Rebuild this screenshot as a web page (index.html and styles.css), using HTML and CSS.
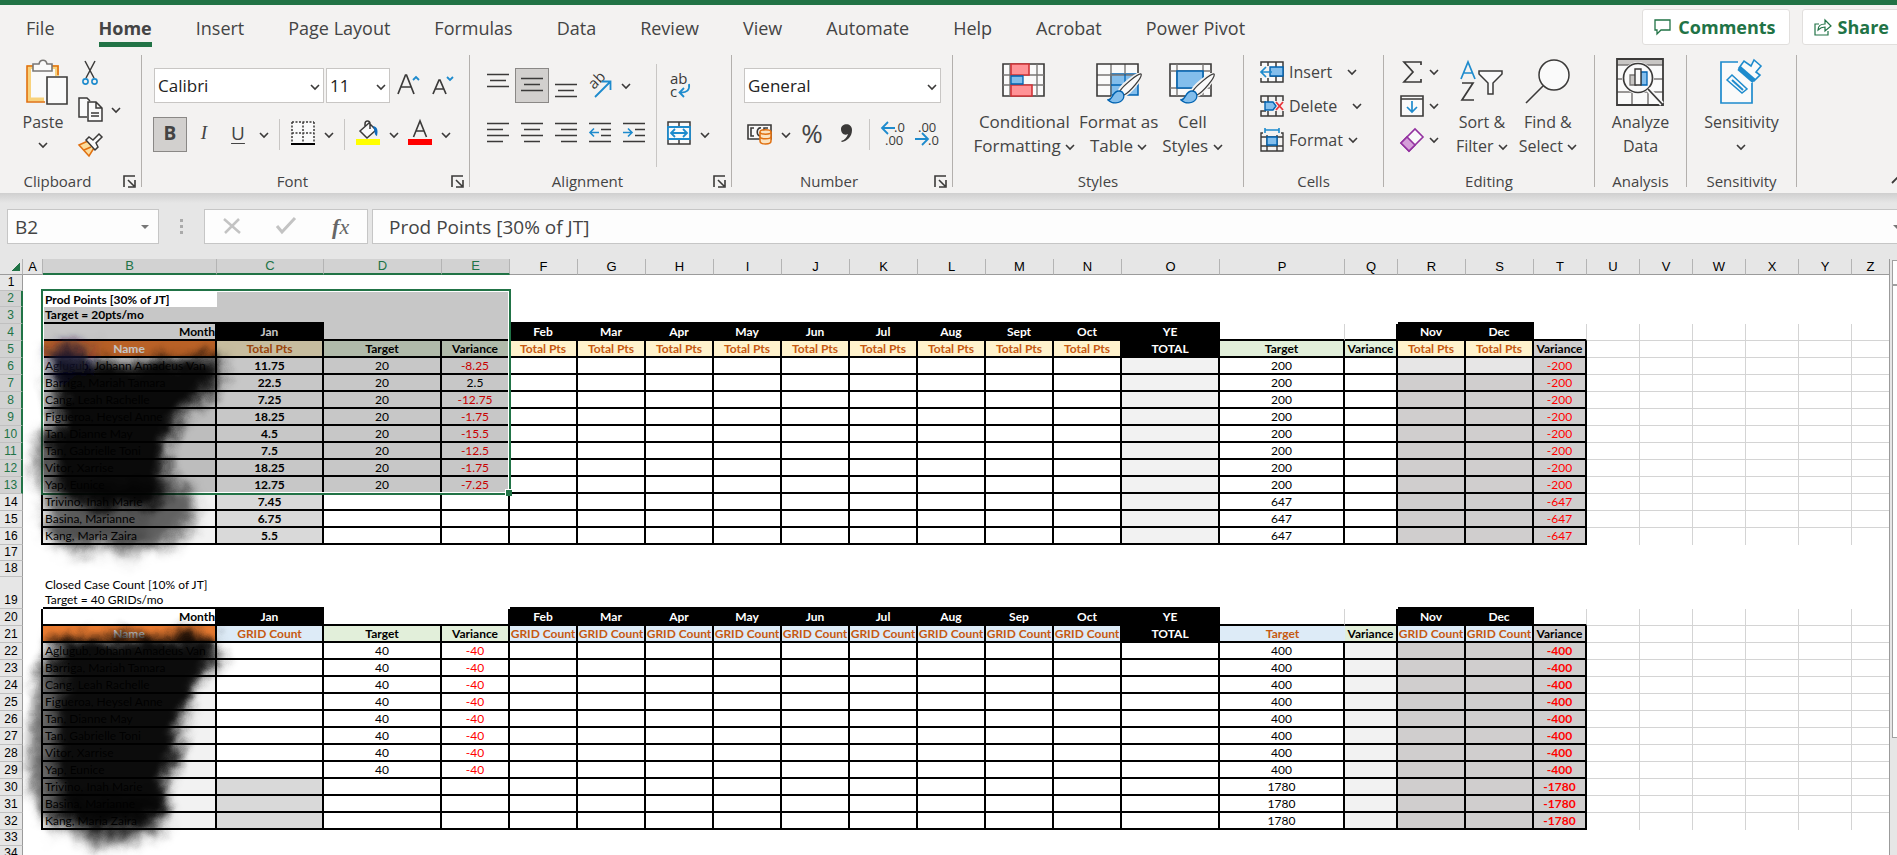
FILE: index.html
```html
<!DOCTYPE html>
<html lang="en">
<head>
    <meta charset="UTF-8">
    <meta name="viewport" content="width=device-width, initial-scale=1.0">
    <title>Prod Points</title>
    <link rel="stylesheet" href="styles.css">
</head>
<body>
    <svg class="defs" width="0" height="0">
        <symbol id="chev" viewBox="0 0 10 10"><path d="M1 3l4 4 4-4" fill="none" stroke="#3b3a39" stroke-width="1.6"/></symbol>
        <symbol id="launch" viewBox="0 0 13 13"><path d="M1 12V1h11M5 5l6 6M12 5v7H5" fill="none" stroke="#3b3a39" stroke-width="1.6"/></symbol>
        <symbol id="brush" viewBox="0 0 36 32">
            <path d="M34 1c-3-1-21 13-21 17l4 4C22 20 36 4 34 1z" fill="#fafafa" stroke="#f3f2f1" stroke-width="4"/>
            <path d="M34 1c-3-1-19 13-21 17l4 4C22 20 36 4 34 1z" fill="#fafafa" stroke="#3b3a39" stroke-width="1.3"/>
            <path d="M1 27c5 0 4-9 11-9 4 0 6 4 4 8-3 5-11 5-15 1z" fill="#83beec" stroke="#0063b1" stroke-width="1.3"/>
        </symbol>
    </svg>
    <header class="ribbon">
        <nav class="tabs">
            <a href="#">File</a>
            <a href="#" class="active">Home</a>
            <a href="#">Insert</a>
            <a href="#">Page Layout</a>
            <a href="#">Formulas</a>
            <a href="#">Data</a>
            <a href="#">Review</a>
            <a href="#">View</a>
            <a href="#">Automate</a>
            <a href="#">Help</a>
            <a href="#">Acrobat</a>
            <a href="#">Power Pivot</a>
            <div class="right">
                <button class="pill"><svg width="18" height="18" viewBox="0 0 18 18"><path d="M1 2h15v10H7l-4 4v-4H1z" fill="none" stroke="#217346" stroke-width="1.3"/></svg>Comments</button>
                <button class="pill share"><svg width="18" height="18" viewBox="0 0 18 18"><path d="M5 6H1v11h13v-4M4 12c0-4 3-6 7-6V2l6 6-6 5V9c-3 0-5 1-7 3z" fill="none" stroke="#217346" stroke-width="1.2"/></svg>Share</button>
            </div>
        </nav>
        <div class="groups">
            <section class="group clipboard">
                <div class="tools">
                    <button class="big paste">
                        <svg width="42" height="46" viewBox="0 0 42 46">
                            <path d="M2 7h30v35H2z" fill="#fafafa"/><path d="M18 40.500H3V8h28v9" fill="none" stroke="#f8d27c" stroke-width="4"/>
                            <path d="M19 43H1V7h31v9" fill="none" stroke="#e07010" stroke-width="1.600"/>
                            <path d="M7 5h6c1-5 7-5 8 0h5v7H7z" fill="#fafafa" stroke="#797775" stroke-width="1.600"/>
                            <path d="M21 18h20v27H21z" fill="#fafafa" stroke="#3b3a39" stroke-width="1.600"/>
                        </svg>
                        <span>Paste</span>
                        <svg class="chev"><use href="#chev"/></svg>
                    </button>
                    <div class="stack">
                        <button class="ic" aria-label="Cut"><svg width="24" height="26" viewBox="0 0 24 26"><path d="M7 1l9 17M17 1L8 18" stroke="#3b3a39" stroke-width="1.5" fill="none"/><circle cx="7.500" cy="21.500" r="2.600" fill="none" stroke="#1e8bcd" stroke-width="1.600"/><circle cx="16.500" cy="21.500" r="2.600" fill="none" stroke="#1e8bcd" stroke-width="1.600"/></svg></button>
                        <button class="ic" aria-label="Copy"><svg width="25" height="25" viewBox="0 0 25 25"><path d="M9 20H1V1h8l3 3" fill="#fafafa" stroke="#3b3a39" stroke-width="1.500"/><path d="M10 5h8l6 6v13H10zM18 5v6h6M13 16h8M13 19h8" fill="#fafafa" stroke="#3b3a39" stroke-width="1.500"/></svg></button>
                        <button class="ic" aria-label="Format Painter"><svg width="25" height="24" viewBox="0 0 25 24"><path d="M1 12l9-4 6 7-5 8z" fill="#fbdc9c" stroke="#e07010" stroke-width="1.500"/><path d="M6 17l7-3" stroke="#e07010" stroke-width="1.500"/><path d="M8 7l3-3 4 3 6-6 3 3-6 6 2 4-3 3z" fill="#fafafa" stroke="#3b3a39" stroke-width="1.500"/></svg></button>
                    </div>
                    <button class="arrow" aria-label="Copy options"><svg class="chev"><use href="#chev"/></svg></button>
                </div>
                <div class="label more">Clipboard<svg class="launch"><use href="#launch"/></svg></div>
            </section>

            <section class="group font">
                <div class="tools rows">
                    <div class="row">
                        <label class="combo name"><select aria-label="Font"><option>Calibri</option></select><svg class="chev"><use href="#chev"/></svg></label>
                        <label class="combo size"><select aria-label="Font size"><option>11</option></select><svg class="chev"><use href="#chev"/></svg></label>
                        <button class="ic grow" aria-label="Increase font size"><svg width="26" height="24" viewBox="0 0 26 24"><path d="M2 20L9.500 1h1L18 20M5 13h10" fill="none" stroke="#3b3a39" stroke-width="1.700"/><path d="M17 6l3-3 3 3" fill="none" stroke="#1e8bcd" stroke-width="1.800"/></svg></button>
                        <button class="ic grow" aria-label="Decrease font size"><svg width="26" height="24" viewBox="0 0 26 24"><path d="M3 20L9 6h1l6 14M5.500 15h8" fill="none" stroke="#3b3a39" stroke-width="1.700"/><path d="M17 3l3 3 3-3" fill="none" stroke="#1e8bcd" stroke-width="1.800"/></svg></button>
                    </div>
                    <div class="row">
                        <button class="ic on bold">B</button>
                        <button class="ic italic">I</button>
                        <button class="ic under">U</button>
                        <button class="arrow" aria-label="Underline options"><svg class="chev"><use href="#chev"/></svg></button>
                        <i class="sep"></i>
                        <button class="ic" aria-label="Borders"><svg width="24" height="24" viewBox="0 0 24 24"><path d="M1 1h22v21H1z" fill="#fafafa"/><path d="M1 1h22M1 1v20M23 1v20M12 1v20M1 12h22" fill="none" stroke="#3b3a39" stroke-width="1.500" stroke-dasharray="2 1.500"/><path d="M0 23h24" stroke="#000" stroke-width="2"/></svg></button>
                        <button class="arrow" aria-label="Border options"><svg class="chev"><use href="#chev"/></svg></button>
                        <i class="sep"></i>
                        <button class="ic" aria-label="Fill color"><svg width="24" height="26" viewBox="0 0 24 26"><path d="M4 11l9-8 7 7-9 8zM9 7V4c0-4 5-4 5 0v5" fill="#fafafa" stroke="#3b3a39" stroke-width="1.500"/><path d="M17 6c5 1 5 5 4 10-3-1-2-5-4-10z" fill="#0f6cbd"/><path d="M0 19h24v6H0z" fill="#ffff00"/></svg></button>
                        <button class="arrow" aria-label="Fill options"><svg class="chev"><use href="#chev"/></svg></button>
                        <button class="ic" aria-label="Font color"><svg width="24" height="26" viewBox="0 0 24 26"><path d="M5.500 17L12 1l6.500 16M8 11h8" fill="none" stroke="#3b3a39" stroke-width="1.600"/><path d="M0 19h24v6H0z" fill="#ff0000"/></svg></button>
                        <button class="arrow" aria-label="Font color options"><svg class="chev"><use href="#chev"/></svg></button>
                    </div>
                </div>
                <div class="label more">Font<svg class="launch"><use href="#launch"/></svg></div>
            </section>

            <section class="group align">
                <div class="tools">
                    <div class="rows">
                        <div class="row">
                            <button class="ic" aria-label="Top align"><svg class="ln" viewBox="0 0 22 24"><path d="M0 .500h22M3 6.500h16M0 12.500h22"/></svg></button>
                            <button class="ic on" aria-label="Middle align"><svg class="ln" viewBox="0 0 22 24"><path d="M0 4.500h22M3 10.500h16M0 16.500h22"/></svg></button>
                            <button class="ic" aria-label="Bottom align"><svg class="ln" viewBox="0 0 22 24"><path d="M0 10.500h22M3 16.500h16M0 22.500h22"/></svg></button>
                            <button class="ic" aria-label="Orientation"><svg width="26" height="26" viewBox="0 0 26 26"><text x="0" y="0" transform="translate(7 17) rotate(-45)" class="svgt">ab</text><path d="M8 24L23 9M15 8.500h8.500V17" fill="none" stroke="#1e8bcd" stroke-width="1.800"/></svg></button>
                            <button class="arrow" aria-label="Orientation options"><svg class="chev"><use href="#chev"/></svg></button>
                        </div>
                        <div class="row">
                            <button class="ic" aria-label="Align left"><svg class="ln" viewBox="0 0 22 24"><path d="M0 2.500h22M0 8.500h16M0 14.500h22M0 20.500h16"/></svg></button>
                            <button class="ic" aria-label="Center"><svg class="ln" viewBox="0 0 22 24"><path d="M0 2.500h22M3 8.500h16M0 14.500h22M3 20.500h16"/></svg></button>
                            <button class="ic" aria-label="Align right"><svg class="ln" viewBox="0 0 22 24"><path d="M0 2.500h22M6 8.500h16M0 14.500h22M6 20.500h16"/></svg></button>
                            <button class="ic" aria-label="Decrease indent"><svg class="ln" viewBox="0 0 22 24"><path d="M0 2.500h22M12 8.500h10M12 14.500h10M0 20.500h22"/><path d="M1 11.500h9M5 7.500l-4 4 4 4" class="blue"/></svg></button>
                            <button class="ic" aria-label="Increase indent"><svg class="ln" viewBox="0 0 22 24"><path d="M0 2.500h22M12 8.500h10M12 14.500h10M0 20.500h22"/><path d="M0 11.500h9M5 7.500l4 4-4 4" class="blue"/></svg></button>
                        </div>
                    </div>
                    <i class="sep tall"></i>
                    <div class="rows">
                        <div class="row">
                            <button class="ic" aria-label="Wrap text"><svg width="24" height="28" viewBox="0 0 24 28"><text x="3" y="12" class="svgt">ab</text><text x="3" y="25" class="svgt">c</text><path d="M22 12c1 6-2 9-9 8.500M17 16l-4.500 4.500L17 25" fill="none" stroke="#1e8bcd" stroke-width="1.800"/></svg></button>
                        </div>
                        <div class="row">
                            <button class="ic" aria-label="Merge and center"><svg width="24" height="24" viewBox="0 0 24 24"><path d="M1 1h22v22H1zM12 1v22" fill="#fafafa" stroke="#3b3a39" stroke-width="1.500"/><path d="M1 6h22v12H1z" fill="#fafafa" stroke="#1e8bcd" stroke-width="1.800"/><path d="M4 12h16M8 8l-4 4 4 4M16 8l4 4-4 4" fill="none" stroke="#1e8bcd" stroke-width="1.800"/></svg></button>
                            <button class="arrow" aria-label="Merge options"><svg class="chev"><use href="#chev"/></svg></button>
                        </div>
                    </div>
                </div>
                <div class="label more">Alignment<svg class="launch"><use href="#launch"/></svg></div>
            </section>

            <section class="group number">
                <div class="tools rows">
                    <div class="row">
                        <label class="combo wide"><select aria-label="Number format"><option>General</option></select><svg class="chev"><use href="#chev"/></svg></label>
                    </div>
                    <div class="row">
                        <button class="ic" aria-label="Accounting format"><svg width="26" height="24" viewBox="0 0 26 24"><path d="M1 4h23v14H1z" fill="#fafafa" stroke="#3b3a39" stroke-width="1.600"/><path d="M7 7H4v8h3M14 7c-5-1-5 9 0 8M17 11V7h4" fill="none" stroke="#3b3a39" stroke-width="1.600"/><path d="M13 11v9c0 4 11 4 11 0v-9" fill="#fbe3c0" stroke="#e07010" stroke-width="1.500"/><ellipse cx="18.500" cy="11" rx="5.500" ry="2.200" fill="#fbe3c0" stroke="#e07010" stroke-width="1.500"/><path d="M13 15.500c0 3 11 3 11 0" fill="none" stroke="#e07010" stroke-width="1.500"/></svg></button>
                        <button class="arrow" aria-label="Accounting options"><svg class="chev"><use href="#chev"/></svg></button>
                        <button class="ic pct">%</button>
                        <button class="ic" aria-label="Comma style"><svg width="14" height="20" viewBox="0 0 14 20"><path d="M2 6c0-6 11-7 11 1 0 7-5 11-10 12l-1-1c4-1 6-4 7-7-4 2-7-1-7-5z" fill="#3b3a39"/></svg></button>
                        <i class="sep"></i>
                        <button class="ic" aria-label="Increase decimal"><svg width="26" height="26" viewBox="0 0 26 26"><path d="M2 8h13M8 2L2 8l6 6" fill="none" stroke="#1e8bcd" stroke-width="1.800"/><text x="14" y="12" class="svgd">.0</text><text x="5" y="25" class="svgd">.00</text></svg></button>
                        <button class="ic" aria-label="Decrease decimal"><svg width="26" height="26" viewBox="0 0 26 26"><text x="4" y="12" class="svgd">.00</text><text x="14" y="25" class="svgd">.0</text><path d="M1 19h12M8 13l6 6-6 6" fill="none" stroke="#1e8bcd" stroke-width="1.800"/></svg></button>
                    </div>
                </div>
                <div class="label more">Number<svg class="launch"><use href="#launch"/></svg></div>
            </section>

            <section class="group styles">
                <div class="tools">
                    <button class="big">
                        <svg width="44" height="46" viewBox="0 0 44 46"><path d="M1 5h41v32H1z" fill="#fafafa" stroke="#3b3a39" stroke-width="1.600"/><path d="M8 5v32M35 5v32M1 16h41M1 26h41" stroke="#797775" stroke-width="1.400"/><path d="M9 5h18v11H9zM9 26h21v11H9z" fill="#ff9296" stroke="#d13438" stroke-width="1.600"/><path d="M9 17h12v8H9z" fill="#83beec" stroke="#0063b1" stroke-width="1.300"/></svg>
                        <span>Conditional</span><span>Formatting <svg class="chev"><use href="#chev"/></svg></span>
                    </button>
                    <button class="big">
                        <svg width="46" height="46" viewBox="0 0 46 46"><path d="M1 5h41v32H1z" fill="#fafafa"/><path d="M15 15h27v21H15z" fill="#83beec" stroke="#0063b1" stroke-width="1.500"/><path d="M15 5v32M29 5v10M1 16h41M1 26h14" stroke="#797775" stroke-width="1.400"/><path d="M29 15v21M15 26h27" stroke="#0063b1" stroke-width="1.300"/><path d="M15 37H1V5h41v9" fill="none" stroke="#3b3a39" stroke-width="1.600"/><use href="#brush" x="11" y="14" width="36" height="32"/></svg>
                        <span>Format as</span><span>Table <svg class="chev"><use href="#chev"/></svg></span>
                    </button>
                    <button class="big">
                        <svg width="46" height="46" viewBox="0 0 46 46"><path d="M1 5h41v32H1z" fill="#fafafa" stroke="#3b3a39" stroke-width="1.600"/><path d="M8 5v32M34 5v32M1 12h41M1 29h41" stroke="#797775" stroke-width="1.400"/><path d="M8 12h26v17H8z" fill="#83beec" stroke="#0063b1" stroke-width="1.600"/><use href="#brush" x="11" y="14" width="36" height="32"/></svg>
                        <span>Cell</span><span>Styles <svg class="chev"><use href="#chev"/></svg></span>
                    </button>
                </div>
                <div class="label">Styles</div>
            </section>

            <section class="group cells">
                <div class="tools list">
                    <button class="line"><svg width="24" height="22" viewBox="0 0 24 22"><path d="M1 1h22v20H1zM8 1v20M16 1v20M1 7h22M1 15h22" fill="#fafafa" stroke="#3b3a39" stroke-width="1.500"/><path d="M0 5h10v12H0z" fill="#f3f2f1"/><path d="M10 6h13v9H10z" fill="#83beec" stroke="#0063b1" stroke-width="1.400"/><path d="M1 11h11M6 6l-5 5 5 5" fill="none" stroke="#1e8bcd" stroke-width="1.700"/></svg>Insert<svg class="chev far"><use href="#chev"/></svg></button>
                    <button class="line"><svg width="24" height="22" viewBox="0 0 24 22"><path d="M1 7V1h22v5M23 16v5H1v-5h5M1 7h5M8 1v6M16 1v5M8 16v5M16 16v5" fill="none" stroke="#3b3a39" stroke-width="1.500"/><path d="M5 7h8l3 4-3 4H5z" fill="#83beec" stroke="#0063b1" stroke-width="1.400"/><path d="M16 7l7 8M23 7l-7 8" stroke="#e8343a" stroke-width="1.800"/></svg>Delete<svg class="chev far"><use href="#chev"/></svg></button>
                    <button class="line"><svg width="24" height="25" viewBox="0 0 24 25"><path d="M5 2h14M5 0v5M19 0v5" stroke="#1e8bcd" stroke-width="1.600" fill="none"/><path d="M3 5H1v18h22V5h-2M1 9h22M1 18h22M7 7v16M17 7v16" fill="none" stroke="#3b3a39" stroke-width="1.400"/><path d="M7 9h10v8H7z" fill="#83beec" stroke="#0063b1" stroke-width="1.400"/></svg>Format<svg class="chev"><use href="#chev"/></svg></button>
                </div>
                <div class="label">Cells</div>
            </section>

            <section class="group editing">
                <div class="tools">
                    <div class="list">
                        <button class="line" aria-label="AutoSum"><svg width="24" height="24" viewBox="0 0 24 24"><path d="M21 5V2H4l9 10-9 10h17v-3" fill="none" stroke="#3b3a39" stroke-width="1.700"/></svg><svg class="chev"><use href="#chev"/></svg></button>
                        <button class="line" aria-label="Fill"><svg width="24" height="22" viewBox="0 0 24 22"><path d="M1 1h22v20H1zM1 4h22" fill="#fafafa" stroke="#3b3a39" stroke-width="1.600"/><path d="M12 6v11M7 12l5 5 5-5" fill="none" stroke="#1e8bcd" stroke-width="1.700"/></svg><svg class="chev"><use href="#chev"/></svg></button>
                        <button class="line" aria-label="Clear"><svg width="24" height="24" viewBox="0 0 24 24"><path d="M1 15L15 1l8 8L9 23z" fill="#fafafa" stroke="#9332a0" stroke-width="1.600"/><path d="M1 15l6-6 8 8-6 6z" fill="#d59ed9" stroke="#9332a0" stroke-width="1.600"/></svg><svg class="chev"><use href="#chev"/></svg></button>
                    </div>
                    <button class="big">
                        <svg width="44" height="46" viewBox="0 0 44 46"><path d="M1 20L8 3l7 17M3 14h10" fill="none" stroke="#1e8bcd" stroke-width="1.700"/><path d="M2 24h11L2 41h12" fill="none" stroke="#3b3a39" stroke-width="1.700"/><path d="M19 12h23v3l-9 9v11h-5V24l-9-9z" fill="#fafafa" stroke="#3b3a39" stroke-width="1.500"/></svg>
                        <span>Sort &amp;</span><span>Filter <svg class="chev"><use href="#chev"/></svg></span>
                    </button>
                    <button class="big">
                        <svg width="46" height="46" viewBox="0 0 46 46"><circle cx="29" cy="16" r="15" fill="#fafafa" stroke="#3b3a39" stroke-width="1.500"/><path d="M18 27L1 44" stroke="#3b3a39" stroke-width="1.600"/></svg>
                        <span>Find &amp;</span><span>Select <svg class="chev"><use href="#chev"/></svg></span>
                    </button>
                </div>
                <div class="label">Editing</div>
            </section>

            <section class="group analysis">
                <div class="tools">
                    <button class="big">
                        <svg width="48" height="48" viewBox="0 0 48 48"><path d="M1 1h46v46H1z" fill="#fafafa"/><path d="M1 1h46v6H1z" fill="#c8c6c4"/><path d="M1 7h46M1 21h46M1 34h46M16 34v13M32 34v13" stroke="#797775" stroke-width="1.500"/><path d="M1 1h46v46H1z" fill="none" stroke="#3b3a39" stroke-width="1.800"/><circle cx="22" cy="20" r="16" fill="#fafafa"/><circle cx="22" cy="20" r="14.500" fill="#fafafa" stroke="#3b3a39" stroke-width="1.700"/><path d="M32 31l14 15" stroke="#fafafa" stroke-width="5"/><path d="M32 31l15 16" stroke="#3b3a39" stroke-width="1.800"/><path d="M14 17h6v10h-6z" fill="#c8c6c4" stroke="#797775" stroke-width="1.300"/><path d="M25 14h6v13h-6z" fill="#83beec" stroke="#0063b1" stroke-width="1.300"/><path d="M19 11h6v16h-6z" fill="#fafafa" stroke="#3b3a39" stroke-width="1.400"/></svg>
                        <span>Analyze</span><span>Data</span>
                    </button>
                </div>
                <div class="label">Analysis</div>
            </section>

            <section class="group sensitivity">
                <div class="tools">
                    <button class="big">
                        <svg width="42" height="46" viewBox="0 0 42 46"><path d="M18 3H1v41h31V24" fill="#fafafa" stroke="#1e8bcd" stroke-width="1.700"/><path d="M7 21l5-5 15 14-5 4z" fill="#fafafa" stroke="#1e8bcd" stroke-width="1.500"/><path d="M12 21l11 10" stroke="#1e8bcd" stroke-width="2"/><path d="M19 9l5-7 7 5 3-6 7 6-5 6 4 3-6 6z" fill="#fafafa" stroke="#1e8bcd" stroke-width="1.600"/><path d="M19 9l15 13" stroke="#1e8bcd" stroke-width="5"/></svg>
                        <span>Sensitivity</span><span><svg class="chev"><use href="#chev"/></svg></span>
                    </button>
                </div>
                <div class="label">Sensitivity</div>
            </section>
            <button class="collapse" aria-label="Collapse ribbon"><svg width="12" height="8" viewBox="0 0 12 8"><path d="M1 7l5-5 5 5" fill="none" stroke="#3b3a39" stroke-width="1.800"/></svg></button>
        </div>
    </header>

    <div class="formula">
        <label class="namebox"><input type="text" value="B2" aria-label="Name box"><i class="tri"></i></label>
        <span class="dots"><i></i><i></i><i></i></span>
        <div class="fx">
            <button aria-label="Cancel"><svg width="18" height="16" viewBox="0 0 18 16"><path d="M1 1l16 14M16 1L2 15" stroke="#c3c3c3" stroke-width="2.500"/></svg></button>
            <button aria-label="Enter"><svg width="20" height="17" viewBox="0 0 20 17"><path d="M1 9l5 6L19 1" fill="none" stroke="#c3c3c3" stroke-width="3"/></svg></button>
            <button class="fxb"><b>f</b>x</button>
        </div>
        <label class="entry"><input type="text" value="Prod Points [30% of JT]" aria-label="Formula"><i class="tri"></i></label>
    </div>

    <main class="sheet">
        <div class="grid">
            <table>
                <colgroup>
                    <col class="w-row"><col class="w-a"><col class="w-b"><col class="w-c"><col class="w-d"><col class="w-m">
                    <col class="w-m"><col class="w-m"><col class="w-m"><col class="w-m"><col class="w-m"><col class="w-m"><col class="w-m"><col class="w-m"><col class="w-m">
                    <col class="w-o"><col class="w-p"><col class="w-s"><col class="w-m"><col class="w-m"><col class="w-s">
                    <col class="w-s"><col class="w-s"><col class="w-s"><col class="w-s"><col class="w-s"><col>
                </colgroup>
                <thead><tr id="heads"></tr></thead>
                <tbody id="rows"></tbody>
            </table>
            <svg class="ink" width="260" height="600" viewBox="0 258 260 600">
                <filter id="smoke" x="-20%" y="-20%" width="140%" height="140%">
                    <feTurbulence type="fractalNoise" baseFrequency="0.035" numOctaves="3" seed="4" result="n"/>
                    <feGaussianBlur in="SourceGraphic" stdDeviation="7" result="b"/>
                    <feDisplacementMap in="b" in2="n" scale="22" xChannelSelector="R" yChannelSelector="G"/>
                </filter>
                <g filter="url(#smoke)">
                    <path d="M50 352L100 358 150 360 218 354 222 374 208 394 180 418 168 440 168 480 150 508 90 508 58 494 54 440 56 400z" opacity=".95"/>
                    <path d="M46 344L92 342 84 372 44 372z" fill="#1d1840" opacity=".5"/>
                    <path d="M34 440L62 420 62 510 40 510z" opacity=".5"/>
                    <path d="M60 490L186 482 198 506 180 535 168 548 70 546 46 536z" opacity=".6"/>
                    <path d="M60 520L156 520 140 558 60 552z" opacity=".2"/>
                </g>
                <g filter="url(#smoke)">
                    <path d="M52 640L100 634 214 634 222 656 194 680 184 720 176 750 166 790 158 824 104 830 60 820 56 760 58 700z" opacity=".95"/>
                    <path d="M34 690L56 646 62 822 42 814 30 770z" opacity=".6"/>
                    <path d="M54 800L168 790 162 834 116 844 58 836z" opacity=".5"/>
                </g>
            </svg>
        </div>
        <div class="scroll"><i class="up"></i><i class="thumb"></i></div>
    </main>

    <script>
        const names = ['Aglugub, Johann Amadeus Van', 'Barriga, Mariah Tamara', 'Cang, Leah Rachelle', 'Figueroa, Heysel Anne', 'Tan, Dianne May', 'Tan, Gabrielle Toni', 'Vitor, Xarrise', 'Yap, Eunice', 'Trivino, Inah Marie', 'Basina, Marianne', 'Kang, Maria Zaira'];
        const cols = 'ABCDEFGHIJKLMNOPQRSTUVWXYZ'.split('');

        // one entry for each block of the sheet, top = row of the black month header
        const blocks = [
            {
                top: 4, unit: 'Total Pts', kind: 'pts', target: 20, sept: 'Sept',
                points: [11.75, 22.5, 7.25, 18.25, 4.5, 7.5, 18.25, 12.75, 7.45, 6.75, 5.5],
                year: i => i < 8 ? 200 : 647
            },
            {
                top: 20, unit: 'GRID Count', kind: 'cnt', target: 40, sept: 'Sep',
                points: [],
                year: i => i < 8 ? 400 : 1780
            }
        ];

        function monthCell(b, c) {
            const months = { C: 'Jan', F: 'Feb', G: 'Mar', H: 'Apr', I: 'May', J: 'Jun', K: 'Jul', L: 'Aug', M: b.sept, N: 'Oct', O: 'YE', R: 'Nov', S: 'Dec' };
            if (c == 'B') return ['Month', 'box bold end'];
            if (months[c]) return [months[c], 'box black'];
            if (c == 'D') return ['', 'line'];
            if (c == 'P' || c == 'T') return ['', 'line gr'];
            return ['', 'box'];
        }

        function titleCell(b, c) {
            if (c == 'B') return ['Name', 'box orange'];
            if (c == 'O') return ['TOTAL', 'box black'];
            if (c == 'P' && b.kind == 'cnt') return ['Target', 'line unit cnt'];
            if (c == 'D' || c == 'P') return ['Target', 'box green'];
            if (c == 'E' || c == 'Q') return ['Variance', 'box green'];
            if (c == 'T') return ['Variance', 'box bold dark'];
            return [b.unit, 'box unit ' + b.kind];
        }

        function dataCell(b, c, i) {
            const first = b.kind == 'pts';
            if (c == 'B') return [names[i], 'box light start'];
            if (c == 'C') return [b.points[i] || '', 'box bold' + (i > 7 ? ' gray' : '')];
            if (c == 'D') return [i < 8 ? b.target : '', 'box'];
            if (c == 'E') {
                if (i > 7) return ['', 'box'];
                const v = (b.points[i] || 0) - b.target;
                return [v, 'box' + (v < 0 ? ' red' : '')];
            }
            if (c == 'O') return ['', 'box' + (first ? ' light' : '')];
            if (c == 'P') return [b.year(i), 'box'];
            if (c == 'Q') return ['', 'box' + (first ? '' : ' light')];
            if (c == 'R' || c == 'S') return ['', 'box ' + (first && i == 0 ? 'pale' : 'dark')];
            if (c == 'T') return [-b.year(i), 'box dark red' + (first ? '' : ' bold')];
            return ['', 'box'];
        }

        function cell(r, c) {
            if (r == 2 && c == 'B') return ['<div class="selection"><i class="handle"></i></div><span class="current">Prod Points [30% of JT]</span>', 'start bold anchor'];
            if (r == 3 && c == 'B') return ['Target = 20pts/mo', 'start bold line'];
            if (r == 19 && c == 'B') return ['Closed Case Count [10% of JT]<br>Target = 40 GRIDs/mo', 'start line'];
            for (const b of blocks) {
                if (r == b.top - 1 && 'CFGHIJKLMNORS'.includes(c)) return ['', 'line'];
                if (r < b.top || r > b.top + 12) continue;
                if (c == 'A') return ['', 'side'];
                if (c > 'T') return ['', (c < 'Z' ? 'gr ' : '') + (r < b.top + 12 ? 'gb' : '')];
                if (r == b.top) return monthCell(b, c);
                if (r == b.top + 1) return titleCell(b, c);
                return dataCell(b, c, r - b.top - 2);
            }
            return ['', ''];
        }

        let head = '<th class="corner"></th>';
        cols.forEach(function (c) {
            head += `<th class="${'BCDE'.includes(c) ? 'sel' : ''}">${c}</th>`;
        })
        document.getElementById('heads').innerHTML = head;

        let html = '';
        for (let r = 1; r <= 34; r++) {
            const short = [1, 2, 17, 18, 33, 34].includes(r);
            html += `<tr class="${r == 19 ? 'double' : short ? 'short' : ''}"><th class="${r > 1 && r < 14 ? 'sel' : ''}">${r}</th>`;
            cols.forEach(function (c) {
                const [text, cls] = cell(r, c);
                html += `<td class="${cls}">${text}</td>`;
            })
            html += '</tr>';
        }
        document.getElementById('rows').innerHTML = html;
    </script>
</body>
</html>
```
FILE: styles.css
```css
*{
    box-sizing: border-box;
    margin: 0;
    padding: 0;
}
body{
    display: flex;
    flex-direction: column;
    height: 100vh;
    overflow: hidden;
    background-color: #e6e6e6;
    font-family: "Open Sans", "Noto Sans", sans-serif;
    color: #444;
}
button, input, select{
    font: inherit;
    color: inherit;
    border: none;
    background: none;
}
svg{
    flex: none;
    overflow: visible;
}
.defs{
    position: absolute;
}

/* ribbon */
.ribbon{
    flex: none;
    border-top: 5px solid #217346;
    background-color: #f3f2f1;
}
.tabs{
    display: flex;
    gap: 44px;
    height: 50px;
    padding-left: 26px;
    font-size: 18px;
    line-height: 24px;
}
.tabs a{
    margin-top: 11px;
    height: 31px;
    color: #444;
    text-decoration: none;
    white-space: nowrap;
}
.tabs .active{
    font-weight: 700;
    border-bottom: 5px solid #217346;
}
.right{
    display: flex;
    gap: 12px;
    margin: 4px -8px 0 auto;
}
.pill{
    display: flex;
    align-items: center;
    gap: 6px;
    height: 36px;
    padding: 0 13px 0 11px;
    border: 1px solid #e1dfdd;
    border-radius: 3px;
    background-color: #fff;
    color: #217346;
    font-weight: 700;
}
.share{
    padding-right: 15px;
}
.groups{
    display: flex;
    height: 138px;
}
.group{
    display: flex;
    flex-direction: column;
    flex: none;
    height: 132px;
    border-right: 1px solid #b3b0ad;
    font-size: 16px;
}
.tools{
    display: flex;
    flex: 1;
}
.label{
    position: relative;
    height: 20px;
    margin-bottom: -4px;
    font-size: 15px;
    line-height: 20px;
    text-align: center;
}
.more{
    padding-right: 26px;
}
.launch{
    position: absolute;
    right: 5px;
    top: 4px;
    width: 13px;
    height: 13px;
}
.clipboard{ width: 142px; }
.font{ width: 328px; }
.align{ width: 262px; }
.number{ width: 221px; }
.styles{ width: 291px; }
.cells{ width: 140px; }
.editing{ width: 211px; }
.analysis{ width: 92px; }
.sensitivity{ width: 110px; }

.chev{
    width: 10px;
    height: 10px;
}
.big{
    display: flex;
    flex-direction: column;
    align-items: center;
    padding-top: 4px;
    line-height: 24px;
    white-space: nowrap;
}
.big > svg:first-child{
    margin-bottom: 5px;
}
.big > span{
    height: 24px;
}
.big > svg[height="48"]{
    margin: -1px 0 4px;
}
.paste{
    width: 72px;
    padding-left: 22px;
}
.paste span{
    margin-left: -8px;
}
.paste .chev{
    margin: 6px 0 0 -8px;
}
.stack{
    display: flex;
    flex-direction: column;
    width: 34px;
    margin-left: 1px;
}
.stack .ic{
    height: 36px;
}
.clipboard .arrow{
    height: 110px;
}
.rows{
    display: flex;
    flex-direction: column;
    gap: 14px;
    padding-top: 13px;
}
.row{
    display: flex;
    height: 35px;
}
.font .rows, .number .rows{
    padding-left: 11px;
}
.align .tools{
    padding-left: 11px;
}
.ic{
    display: flex;
    align-items: center;
    justify-content: center;
    width: 34px;
}
.row + .row .ic{
    padding-bottom: 4px;
}
.on{
    border: 1px solid #8a8886;
    background-color: #d2d0ce;
}
.arrow{
    display: flex;
    align-items: center;
    justify-content: center;
    width: 18px;
}
.combo{
    position: relative;
    margin-right: 2px;
    background-color: #fff;
    border: 1px solid #c8c6c4;
    color: #222;
}
.combo select{
    width: 100%;
    height: 100%;
    padding-left: 3px;
    appearance: none;
    font-size: 17px;
}
.combo .chev{
    position: absolute;
    right: 3px;
    top: 13px;
}
.name{
    width: 170px;
    margin-left: 1px;
}
.size{ width: 64px; }
.wide{
    width: 197px;
    margin-left: 1px;
}
.bold{
    font-weight: 700;
}
.ic.bold, .italic, .under{
    font-size: 19px;
}
.italic{
    font-family: "Liberation Serif", serif;
    font-style: italic;
}
.under{
    text-decoration: underline;
    text-underline-offset: 3px;
}
.pct{
    font-size: 26px;
}
.sep{
    width: 1px;
    margin: 2px 6px;
    background-color: #c8c6c4;
}
.tall{
    margin: 9px 5px 4px;
}
.ln{
    width: 22px;
    height: 24px;
    fill: none;
    stroke: #3b3a39;
    stroke-width: 1.6;
}
.blue{
    stroke: #1e8bcd;
}
.svgt{
    font-size: 15px;
    fill: #3b3a39;
}
.svgd{
    font-size: 13px;
    fill: #3b3a39;
}
.styles .tools{
    justify-content: center;
    gap: 4px;
    font-size: 17px;
}
.list{
    display: flex;
    flex-direction: column;
}
.line{
    white-space: nowrap;
}
button.line{
    display: flex;
    align-items: center;
    gap: 5px;
    height: 34px;
}
.cells .tools{
    padding-left: 16px;
}
.far{
    margin-left: 10px;
}
.editing .tools{
    padding-left: 16px;
    gap: 11px;
}
.editing .list{
    margin-right: 6px;
}
.analysis .tools, .sensitivity .tools{
    justify-content: center;
}
.collapse{
    margin: auto -6px 4px auto;
}

/* formula bar */
.formula{
    display: flex;
    flex: none;
    height: 66px;
    padding: 16px 0 15px 7px;
    background: linear-gradient(#cfcfcf, #e6e6e6 10px);
    font-size: 19px;
}
.namebox, .fx, .entry{
    display: flex;
    align-items: center;
    border: 1px solid #c6c6c6;
    background-color: #fdfdfd;
}
.namebox{
    width: 152px;
    padding: 0 9px 0 7px;
}
.formula input{
    flex: 1;
    min-width: 0;
}
.tri{
    border: 4px solid transparent;
    border-top-color: #777;
    border-bottom: none;
}
.dots{
    display: flex;
    flex-direction: column;
    justify-content: center;
    align-items: center;
    gap: 3px;
    width: 45px;
}
.dots i{
    width: 3px;
    height: 3px;
    background-color: #aaa;
}
.fx{
    width: 164px;
    justify-content: space-around;
    margin-right: 4px;
}
.fxb{
    font: italic 22px "Liberation Serif", serif;
    color: #666;
}
.entry{
    flex: 1;
    padding-left: 16px;
    margin-right: -4px;
    border-right: none;
}

/* sheet */
.sheet{
    display: flex;
    flex: 1;
    min-height: 0;
}
.grid{
    position: relative;
    flex: 1;
    min-width: 0;
    overflow: hidden;
    border-right: 1px solid #9b9b9b;
    background: linear-gradient(#e6e6e6 15px, #fff 15px);
}
table{
    width: 100%;
    table-layout: fixed;
    border-collapse: separate;
    border-spacing: 0;
    font-family: Lato, "Open Sans", sans-serif;
    font-size: 12px;
    line-height: 15px;
    color: #000;
}
.w-row{ width: 23px; }
.w-a{ width: 20px; }
.w-b{ width: 174px; }
.w-c{ width: 107px; }
.w-d{ width: 118px; }
.w-m{ width: 68px; }
.w-s{ width: 53px; }
.w-o{ width: 98px; }
.w-p{ width: 125px; }
th{
    font-family: "Liberation Sans", sans-serif;
    font-size: 13px;
    font-weight: 400;
    background-color: #e6e6e6;
}
thead th{
    height: 16px;
    line-height: 14px;
    border-right: 1px solid #b4b4b4;
    border-bottom: 1px solid #9b9b9b;
}
thead .corner{
    background: linear-gradient(135deg, transparent 50%, #217346 50%) 12px 4px / 8px 8px no-repeat #e6e6e6;
}
thead th:last-child{
    border-right: none;
}
thead .sel{
    background-color: #d2d2d2;
    color: #217346;
    border-bottom: 2px solid #217346;
}
tbody th{
    height: 17px;
    font-size: 12px;
    border-right: 1px solid #9b9b9b;
    border-bottom: 1px solid #c0c0c0;
    vertical-align: bottom;
}
.short th{
    height: 16px;
}
.double th{
    height: 32px;
}
tbody .sel{
    background-color: #d2d2d2;
    color: #217346;
    border-right: 2px solid #217346;
}
td{
    overflow: hidden;
    text-align: center;
    white-space: nowrap;
    background-color: #fff;
}
.box{
    border-right: 2px solid #000;
    border-bottom: 2px solid #000;
}
td.line{
    border-bottom: 2px solid #000;
}
.side{
    border-right: 2px solid #000;
}
.gr{
    border-right: 1px solid #d4d4d4;
}
.gb{
    border-bottom: 1px solid #d4d4d4;
}
.start{
    padding-left: 2px;
    text-align: left;
}
.end{
    text-align: right;
}
.black{
    background-color: #000;
    color: #fff;
    font-weight: 700;
}
.orange{
    background-color: #ed7d31;
    color: #fff;
    font-weight: 700;
}
.green{
    background-color: #e2efda;
    font-weight: 700;
}
.unit{
    color: #c65911;
    font-weight: 700;
}
.pts{ background-color: #fff2cc; }
.cnt{ background-color: #ddebf7; }
.light{ background-color: #f2f2f2; }
.gray{ background-color: #d9d9d9; }
.dark{ background-color: #d0cece; }
.pale{ background-color: #e7e6e6; }
.red{ color: #ff0000; }

/* selected range B2:E13, drawn over the cells */
.anchor{
    position: relative;
    overflow: visible;
}
.selection{
    position: absolute;
    z-index: 1;
    left: -2px;
    top: -2px;
    width: 470px;
    height: 206px;
    border: 2px solid #217346;
    background-color: rgba(0, 0, 0, .22);
    box-shadow: inset 0 0 0 1px #fff;
}
.handle{
    position: absolute;
    right: -3px;
    bottom: -3px;
    width: 7px;
    height: 7px;
    border: 1px solid #fff;
    border-right: none;
    border-bottom: none;
    background-color: #217346;
}
.current{
    position: relative;
    z-index: 2;
    display: block;
    margin-left: -1px;
    padding-left: 1px;
    background-color: #fff;
}
.ink{
    position: absolute;
    z-index: 3;
    left: 0;
    top: 0;
    pointer-events: none;
}
.scroll{
    display: flex;
    flex-direction: column;
    width: 7px;
    padding: 1px 0 0 2px;
}
.up{
    height: 26px;
    border: 2px solid #a0a0a0;
    border-width: 1px 0 2px 1px;
    background-color: #fff;
}
.thumb{
    height: 452px;
    border: 1px solid #a0a0a0;
    border-width: 0 0 1px 1px;
    background-color: #fff;
}
```
